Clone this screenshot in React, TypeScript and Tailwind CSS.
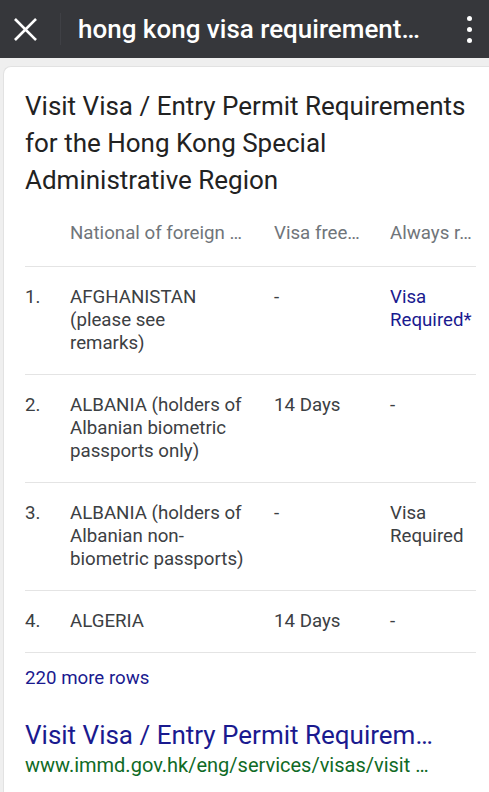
const ROWS = [
  { n: '1.', country: ['AFGHANISTAN', '(please see', 'remarks)'], free: '-', always: ['Visa', 'Required*'], link: true },
  { n: '2.', country: ['ALBANIA (holders of', 'Albanian biometric', 'passports only)'], free: '14 Days', always: ['-'], link: false },
  { n: '3.', country: ['ALBANIA (holders of', 'Albanian non-', 'biometric passports)'], free: '-', always: ['Visa', 'Required'], link: false },
  { n: '4.', country: ['ALGERIA'], free: '14 Days', always: ['-'], link: false },
]

export default function App() {
  return (
    <div className="w-[489px] h-[792px] overflow-hidden bg-[#efefef] flex flex-col" style={{ fontFamily: 'Roboto, "Noto Sans", sans-serif' }}>
      {/* Top bar */}
      <div className="h-[58px] shrink-0 bg-[#36373b] flex items-center">
        <div className="w-[50px] flex justify-center pl-[1px]">
          <svg width="23" height="23" viewBox="0 0 24 24" className="text-white">
            <path d="M2 2 L22 22 M22 2 L2 22" stroke="currentColor" strokeWidth="2.8" strokeLinecap="square" />
          </svg>
        </div>
        <div className="w-px h-[32px] bg-[#3f4045] ml-[10px]" />
        <div className="ml-[17px] text-white text-[26px] font-medium whitespace-nowrap">
          hong kong visa requirement…
        </div>
        <div className="ml-auto mr-[17px] flex flex-col gap-[6px]">
          <span className="block w-[5px] h-[5px] rounded-full bg-white" />
          <span className="block w-[5px] h-[5px] rounded-full bg-white" />
          <span className="block w-[5px] h-[5px] rounded-full bg-white" />
        </div>
      </div>

      {/* Card */}
      <div className="flex-1 mt-[8px] ml-[3px] w-[500px] bg-white rounded-tl-[8px] border-l border-t border-[#e2e2e2] pl-[21px] pt-[21px]">
        <h1 className="text-[26px] leading-[37px] text-[#222] whitespace-nowrap">
          Visit Visa / Entry Permit Requirements
          <br />
          for the Hong Kong Special
          <br />
          Administrative Region
        </h1>

        <div className="w-[451px] mt-[23px]">
          <div className="grid grid-cols-[45px_204px_116px_86px] text-[18.7px] leading-[23px] text-[#70757a] pb-[21px] border-b border-[#e4e4e4] whitespace-nowrap">
            <div />
            <div>National of foreign …</div>
            <div>Visa free…</div>
            <div>Always r…</div>
          </div>

          {ROWS.map((r) => (
            <div
              key={r.n}
              className="grid grid-cols-[45px_204px_116px_86px] text-[18.7px] leading-[23px] text-[#3c4043] py-[19px] border-b border-[#e4e4e4] whitespace-nowrap"
            >
              <div>{r.n}</div>
              <div>
                {r.country.map((line) => (
                  <div key={line}>{line}</div>
                ))}
              </div>
              <div>{r.free}</div>
              <div className={r.link ? 'text-[#1a1a8f]' : ''}>
                {r.always.map((line) => (
                  <div key={line}>{line}</div>
                ))}
              </div>
            </div>
          ))}

          <div className="pt-[14px] text-[18.7px] leading-[23px] text-[#1a1a8f]">220 more rows</div>

          <div className="mt-[30px] text-[26px] leading-[30px] text-[#1a1a8f] whitespace-nowrap">
            Visit Visa / Entry Permit Requirem…
          </div>
          <div className="mt-[4px] text-[20px] leading-[23px] text-[#0f6a25] whitespace-nowrap">
            www.immd.gov.hk/eng/services/visas/visit …
          </div>
        </div>
      </div>
    </div>
  )
}
